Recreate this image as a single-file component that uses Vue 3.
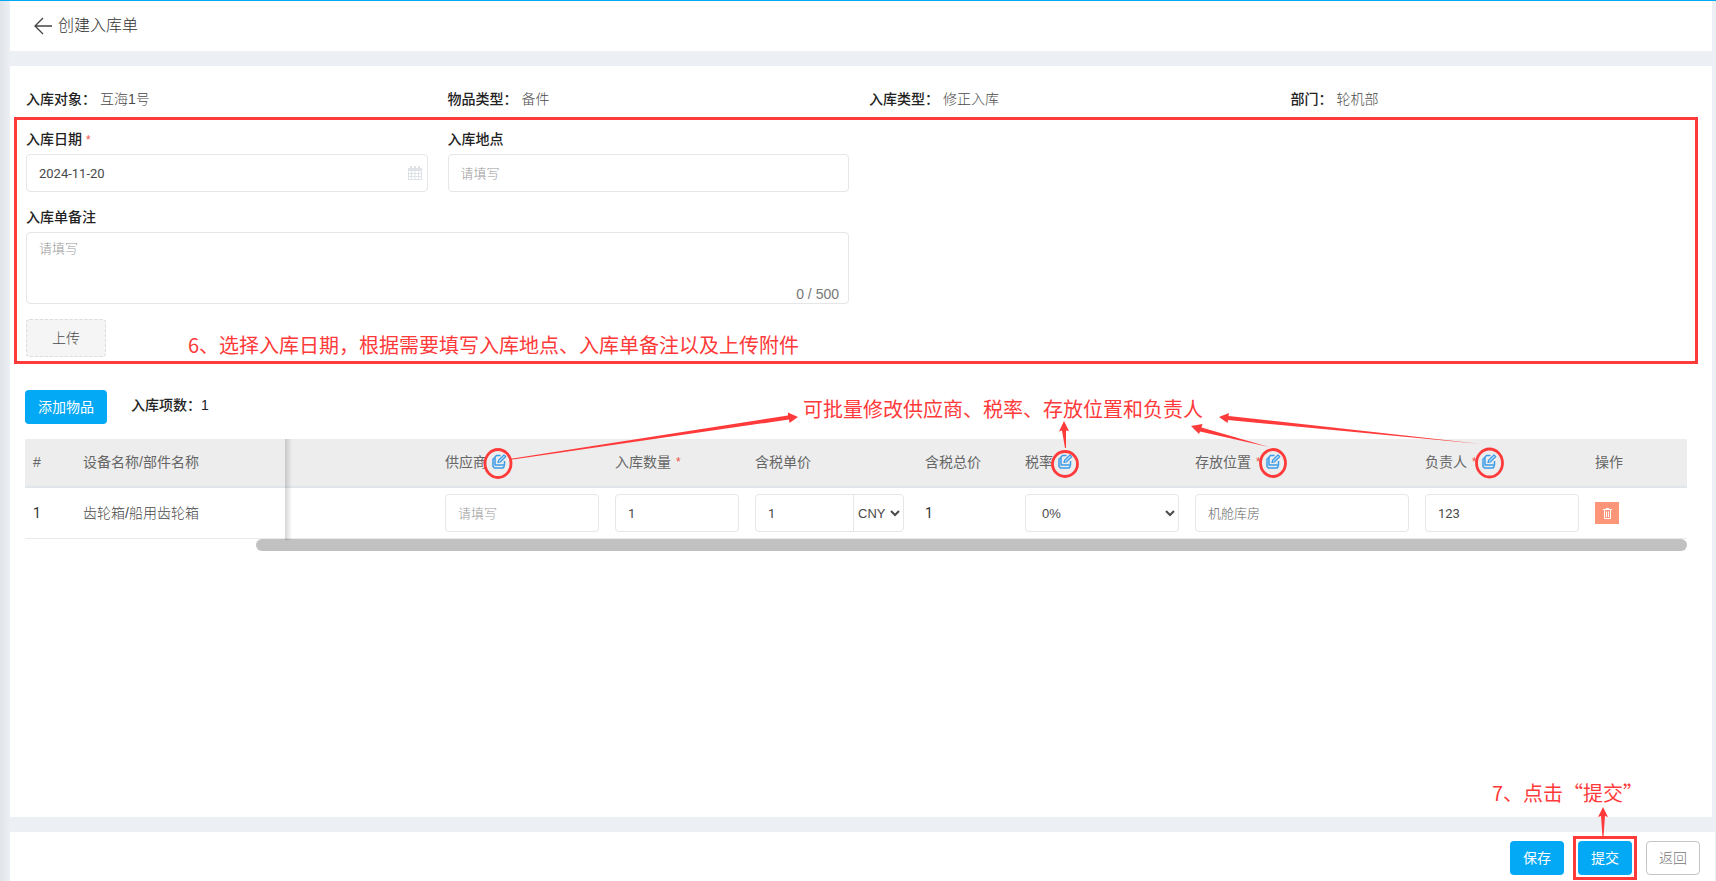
<script setup>
import { ref } from 'vue'

const info = [
  { label: '入库对象：', value: '互海1号' },
  { label: '物品类型：', value: '备件' },
  { label: '入库类型：', value: '修正入库' },
  { label: '部门：', value: '轮机部' },
]

const columns = [
  { key: 'index', title: '#' },
  { key: 'name', title: '设备名称/部件名称' },
  { key: 'blank', title: '' },
  { key: 'supplier', title: '供应商', edit: true },
  { key: 'quantity', title: '入库数量', required: true },
  { key: 'price', title: '含税单价' },
  { key: 'total', title: '含税总价' },
  { key: 'tax', title: '税率', edit: true },
  { key: 'location', title: '存放位置', required: true, edit: true },
  { key: 'owner', title: '负责人', required: true, edit: true },
  { key: 'action', title: '操作' },
]

const date = ref('2024-11-20')
const place = ref('')
const remark = ref('')
const row = ref({
  supplier: '',
  quantity: '1',
  price: '1',
  currency: 'CNY',
  tax: '0%',
  location: '',
  owner: '123',
})
</script>

<template>
  <div class="page">
    <header class="topbar">
      <a class="back" href="#" aria-label="返回上一页">
        <svg width="18" height="18" viewBox="0 0 18 18" fill="none" stroke="#444" stroke-width="1.3">
          <path d="M9 1 L1 9 L9 17 M1 9 H18" />
        </svg>
      </a>
      <h1>创建入库单</h1>
    </header>

    <main class="card">
      <dl class="grid info">
        <div v-for="item in info" :key="item.label">
          <dt>{{ item.label }}</dt>
          <dd>{{ item.value }}</dd>
        </div>
      </dl>

      <section class="form">
        <div class="grid">
          <div class="field">
            <label for="date">入库日期 <i class="star">*</i></label>
            <div class="date">
              <input id="date" v-model="date" type="text" />
              <svg width="14" height="14" viewBox="0 0 14 14" fill="#dfe3e7">
                <path fill-rule="evenodd" d="M0 2h2V0h2v2h2V0h2v2h2V0h2v2h2v12H0z M1 5v2h2V5z M4 5v2h2.5V5z M7.500 5v2H10V5z M11 5v2h2V5z M1 8v2h2V8z M4 8v2h2.500V8z M7.500 8v2H10V8z M11 8v2h2V8z M1 11v2h2v-2z M4 11v2h2.500v-2z M7.500 11v2H10v-2z M11 11v2h2v-2z" />
              </svg>
            </div>
          </div>
          <div class="field">
            <label for="place">入库地点</label>
            <input id="place" v-model="place" type="text" placeholder="请填写" />
          </div>
        </div>
        <div class="grid">
          <div class="field wide">
            <label for="remark">入库单备注</label>
            <div class="area">
              <textarea id="remark" v-model="remark" maxlength="500" placeholder="请填写"></textarea>
              <span class="counter">{{ remark.length }} / 500</span>
            </div>
          </div>
        </div>
        <button class="upload" type="button">上传</button>
        <p class="note note-form">6、选择入库日期，根据需要填写入库地点、入库单备注以及上传附件</p>
      </section>

      <div class="toolbar">
        <button class="btn primary add" type="button">添加物品</button>
        <strong>入库项数：1</strong>
      </div>

      <div class="table-wrap">
        <table>
          <colgroup>
            <col v-for="c in columns" :key="c.key" :class="'col-' + c.key" />
          </colgroup>
          <thead>
            <tr>
              <th v-for="c in columns" :key="c.key" scope="col" :class="{ pinned: c.key === 'name' }">
                <span class="head">
                  <span>{{ c.title }}</span>
                  <i v-if="c.required" class="star">*</i>
                  <button v-if="c.edit" class="edit" type="button" :aria-label="'批量修改' + c.title">
                    <svg width="15" height="15" viewBox="0 0 15 15" fill="none" stroke="#3a9be6" stroke-width="1.5" stroke-linejoin="round">
                      <path d="M8.500 1.500H4.500L3 3v8h9.500V7" />
                      <path d="M3 3.500L1 5v7.500L2.500 14H11l1.500-2" />
                      <path d="M6 8.500l.6-2.300L12 .9l1.800 1.700L8.300 8z" fill="#b8dcf6" stroke-width="1.200" />
                    </svg>
                  </button>
                </span>
              </th>
            </tr>
          </thead>
          <tbody>
            <tr>
              <td class="num">1</td>
              <td class="pinned">齿轮箱/船用齿轮箱</td>
              <td></td>
              <td><input v-model="row.supplier" type="text" placeholder="请填写" aria-label="供应商" /></td>
              <td><input v-model="row.quantity" type="text" aria-label="入库数量" /></td>
              <td>
                <div class="price">
                  <input v-model="row.price" type="text" aria-label="含税单价" />
                  <select v-model="row.currency" aria-label="币种">
                    <option>CNY</option>
                    <option>USD</option>
                  </select>
                </div>
              </td>
              <td class="num">1</td>
              <td>
                <select v-model="row.tax" class="tax" aria-label="税率">
                  <option>0%</option>
                  <option>13%</option>
                </select>
              </td>
              <td><input v-model="row.location" class="picker" type="text" placeholder="机舱库房" aria-label="存放位置" /></td>
              <td><input v-model="row.owner" type="text" aria-label="负责人" /></td>
              <td>
                <button class="remove" type="button" aria-label="删除">
                  <svg width="9" height="11" viewBox="0 0 9 11" fill="none" stroke="#fff">
                    <path d="M0 1.500H9M3 .5H6M1.500 2V10.500H7.500V2M3.500 3.500V9M5.500 3.500V9" />
                  </svg>
                </button>
              </td>
            </tr>
          </tbody>
        </table>
        <div class="scroll"></div>
      </div>
    </main>

    <footer class="footer">
      <button class="btn primary" type="button">保存</button>
      <button class="btn primary" type="button">提交</button>
      <button class="btn plain" type="button">返回</button>
      <p class="note note-submit">7、点击“提交”</p>
      <span class="frame"></span>
      <svg class="up" width="12" height="30" viewBox="0 0 12 30" fill="#ff3a3a">
        <path d="M6 0L11 10L8 9L6.500 30H5.500L4 9L1 10z" />
      </svg>
    </footer>

    <p class="note note-batch">可批量修改供应商、税率、存放位置和负责人</p>
    <svg class="arrows" width="1000" height="70" viewBox="500 410 1000 70" aria-hidden="true">
      <g fill="#ff3a3a">
        <path d="M511 458.800L788 415.500L788 412.500L798 417L789.500 423L789 419.500L511 459.800z" />
        <path d="M1064 421L1069 431L1066 430.500L1066 448H1065L1062 430.500L1059 431.500z" />
        <path d="M1191 426L1202.500 424L1201.500 427.500L1269 447L1200 431.500L1199 434z" />
        <path d="M1219 417L1229 413L1228.500 416L1481 444L1228 420L1227.500 423z" />
      </g>
      <g fill="none" stroke="#ff3a3a" stroke-width="2.800">
        <ellipse cx="498" cy="463.500" rx="13" ry="14" />
        <circle cx="1065" cy="464" r="12.500" />
        <ellipse cx="1273" cy="463" rx="12.500" ry="13.500" />
        <ellipse cx="1489.500" cy="463" rx="13" ry="14" />
      </g>
    </svg>
  </div>
</template>

<style>
body {
  margin: 0;
}
</style>

<style scoped>
* {
  box-sizing: border-box;
}

.page {
  position: relative;
  display: flex;
  flex-direction: column;
  min-height: 100vh;
  padding-left: 10px;
  border-top: 1px solid #03a9f4;
  background: linear-gradient(90deg, #e1e5e9 0, #eceff4 10px);
  color: #4a4a4a;
  font: 300 14px/20px "Liberation Sans", "Noto Sans CJK SC", sans-serif;
}

h1,
p,
dl,
dd {
  margin: 0;
}

button,
input,
select,
textarea {
  margin: 0;
  font: inherit;
  color: inherit;
}

.topbar {
  display: flex;
  align-items: center;
  gap: 6px;
  height: 50px;
  margin: 0 4px 15px 0;
  padding-left: 24px;
  background: #fff;
}

.back {
  display: flex;
}

h1 {
  font-size: 16px;
  line-height: 24px;
  font-weight: 300;
  color: #333;
}

.card {
  flex: 1;
  margin-right: 4px;
  padding: 23px 20px 0 16px;
  background: #fff;
}

.grid {
  display: grid;
  grid-template-columns: repeat(4, 1fr);
  column-gap: 20px;
}

.info > div {
  display: flex;
  gap: 4px;
}

dt,
label,
.toolbar strong {
  font-weight: 500;
  color: #222;
}

.form {
  position: relative;
  margin-top: 20px;
}

.form::before {
  content: "";
  position: absolute;
  inset: -12px -6px -7px -12px;
  border: 3px solid #ff3a3a;
  pointer-events: none;
}

.field {
  display: flex;
  flex-direction: column;
  gap: 5px;
  margin-bottom: 15px;
}

.wide {
  grid-column: span 2;
}

.star {
  font-style: normal;
  font-size: 12px;
  line-height: 1;
  color: #f0503c;
}

input,
textarea,
select {
  display: block;
  width: 100%;
  height: 38px;
  padding: 0 12px;
  border: 1px solid #e5e6e7;
  border-radius: 4px;
  background: #fff;
  font-family: Roboto, "Noto Sans CJK SC", sans-serif;
  font-size: 13px;
  font-weight: 400;
  outline: none;
}

input::placeholder,
textarea::placeholder {
  color: #999;
  font-weight: 300;
  opacity: 1;
}

.date,
.area {
  position: relative;
}

.date svg {
  position: absolute;
  top: 12px;
  right: 6px;
}

textarea {
  height: 72px;
  padding: 6px 12px;
  resize: none;
}

.counter {
  position: absolute;
  right: 10px;
  bottom: 0;
  font-weight: 400;
  color: #777;
}

.upload {
  display: block;
  width: 80px;
  height: 38px;
  padding: 0;
  border: 1px dashed #dcdcdc;
  border-radius: 4px;
  background: #f5f5f5;
}

.note {
  position: absolute;
  color: #ff3a3a;
  font-family: "Noto Sans CJK SC", sans-serif;
  font-size: 20px;
  line-height: 28px;
  font-weight: 400;
  white-space: nowrap;
}

.note-form {
  left: 162px;
  bottom: -2px;
}

.toolbar {
  display: flex;
  align-items: flex-start;
  gap: 24px;
  margin: 33px 0 15px -1px;
}

.toolbar strong {
  margin-top: 5px;
}

.btn {
  min-width: 54px;
  height: 34px;
  padding: 0 12px;
  border: 0;
  border-radius: 4px;
}

.primary {
  background: #03a9f4;
  color: #fff;
  font-weight: 400;
}

.plain {
  padding: 0;
  border: 1px solid #c4c4c4;
  background: #fff;
  color: #777;
}

.add {
  width: 82px;
}

.table-wrap {
  margin: 0 5px 0 -1px;
}

table {
  width: 100%;
  table-layout: fixed;
  border-collapse: separate;
  border-spacing: 0;
}

.col-index {
  width: 50px;
}

.col-name {
  width: 210px;
}

.col-blank {
  width: 152px;
}

.col-supplier,
.col-price,
.col-tax,
.col-owner {
  width: 170px;
}

.col-quantity {
  width: 140px;
}

.col-total {
  width: 100px;
}

.col-location {
  width: 230px;
}

th {
  height: 49px;
  padding: 0 8px 2px;
  border-bottom: 2px solid #e1e5e9;
  background: #ededed;
  text-align: left;
  font-weight: 400;
  color: #666;
  white-space: nowrap;
}

td {
  height: 51px;
  padding: 0 8px;
  border-bottom: 1px solid #e7e9eb;
}

.pinned {
  position: relative;
}

.pinned::after {
  content: "";
  position: absolute;
  top: 0;
  bottom: -2px;
  left: 100%;
  width: 7px;
  background: linear-gradient(90deg, rgba(0, 0, 0, 0.16), rgba(0, 0, 0, 0));
}

.num {
  font-family: Roboto, sans-serif;
  font-weight: 400;
  color: #333;
}

.head {
  display: flex;
  align-items: center;
  gap: 5px;
}

.edit {
  display: flex;
  padding: 0;
  border: 0;
  background: none;
}

.price {
  display: flex;
  margin-right: 5px;
}

.price input {
  flex: 1;
  min-width: 0;
  border-radius: 4px 0 0 4px;
}

.price select {
  width: 51px;
  margin-left: -1px;
  padding: 0;
  border-radius: 0 4px 4px 0;
}

select {
  font-family: "Liberation Sans", sans-serif;
}

.picker::placeholder {
  color: #666;
}

.remove {
  display: flex;
  align-items: center;
  justify-content: center;
  width: 24px;
  height: 22px;
  padding: 0;
  border: 0;
  background: #fd9678;
}

.scroll {
  height: 12px;
  margin-left: 231px;
  border-radius: 6px;
  background: #c1c1c1;
}

.footer {
  position: relative;
  display: flex;
  justify-content: flex-end;
  gap: 14px;
  margin: 15px 1px 0 0;
  padding: 9px 15px 6px;
  background: #fff;
}

.note-submit {
  right: 72px;
  bottom: 74px;
}

.frame {
  position: absolute;
  top: 4px;
  right: 78px;
  width: 64px;
  height: 44px;
  border: 3px solid #ff3a3a;
  pointer-events: none;
}

.up {
  position: absolute;
  top: -25px;
  right: 106px;
}

.note-batch {
  top: 394px;
  left: 803px;
}

.arrows {
  position: absolute;
  top: 409px;
  left: 500px;
  overflow: visible;
  pointer-events: none;
}
</style>
